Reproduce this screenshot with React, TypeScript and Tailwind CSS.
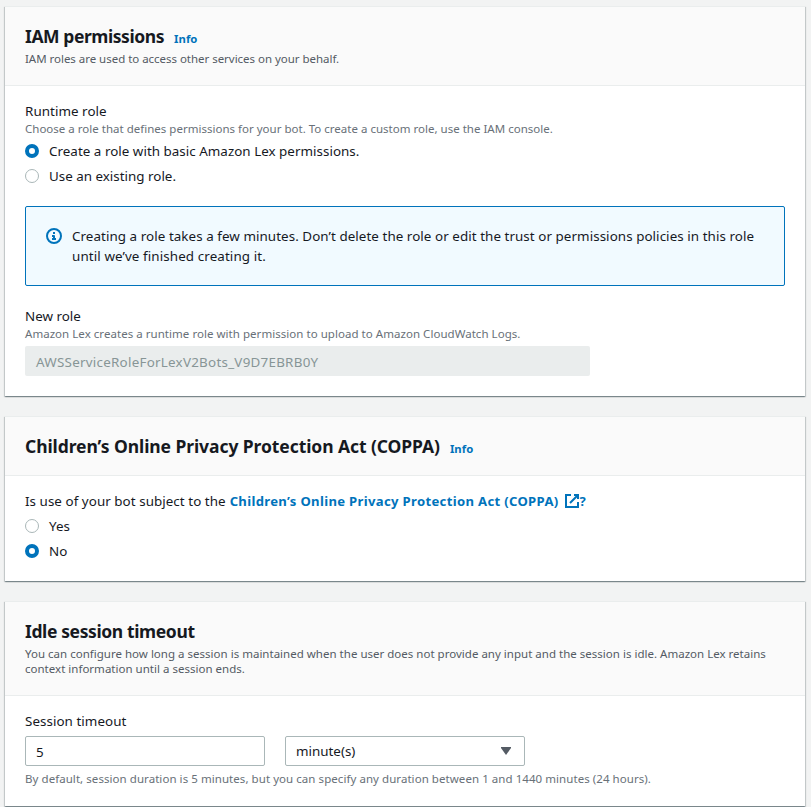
import type { ReactNode } from 'react';

function Card({ title, info, description, className, children }: { title: ReactNode; info?: boolean; description?: ReactNode; className: string; children: ReactNode }) {
  return (
    <section className={`flex flex-col border-t border-[#eaeded] bg-white shadow-[0_1px_1px_0_rgba(0,28,36,0.3),1px_1px_1px_0_rgba(0,28,36,0.15),-1px_1px_1px_0_rgba(0,28,36,0.15)] ${className}`}>
      <header className="border-b border-[#eaeded] bg-[#fafafa] px-5 pt-[18px] pb-[16px]">
        <div className="flex h-[22px] items-baseline gap-[10px] whitespace-nowrap">
          <h2 className="text-[17.5px] leading-[22px] font-bold text-[#16191f]">{title}</h2>
          {info && <a className="text-[11.3px] leading-[16px] font-bold tracking-[0.05px] text-[#0073bb]">Info</a>}
        </div>
        {description ? (
          <p className="mt-[4px] mb-[3px] text-[11.5px] leading-[15px] whitespace-nowrap text-[#545b64]">{description}</p>
        ) : (
          <div className="h-[2px]" />
        )}
      </header>
      <div className="flex flex-col px-5 pt-[15px]">{children}</div>
    </section>
  );
}

function Radio({ checked, children }: { checked?: boolean; children: ReactNode }) {
  return (
    <label className="flex h-5 items-center gap-[10px] whitespace-nowrap">
      <span className={`size-[14px] shrink-0 rounded-full ${checked ? 'border-[4px] border-[#0073bb] bg-white' : 'border border-[#aab7b8] bg-white'}`} />
      {children}
    </label>
  );
}

export default function App() {
  return (
    <main className="flex h-[807px] w-[811px] flex-col gap-5 overflow-hidden bg-[#f2f3f3] pt-[6px] pr-[6px] pl-[5px] font-['Noto_Sans',sans-serif] text-[13.4px] leading-5 text-[#16191f]">
      <Card
        className="h-[390px] shrink-0"
        title={<span className="tracking-[-0.43px]">IAM permissions</span>}
        info
        description={<span className="tracking-[-0.03px]">IAM roles are used to access other services on your behalf.</span>}
      >
        <div className="tracking-[0.05px]">Runtime role</div>
        <p className="text-[11.5px] leading-[15px] tracking-[0.01px] whitespace-nowrap text-[#687078]">
          Choose a role that defines permissions for your bot. To create a custom role, use the IAM console.
        </p>
        <div className="mt-[5px] flex flex-col gap-[5px]">
          <Radio checked><span className="tracking-[0.025px]">Create a role with basic Amazon Lex permissions.</span></Radio>
          <Radio><span>Use an existing role.</span></Radio>
        </div>
        <div className="mt-5 flex h-20 gap-[10px] rounded-[2px] border border-[#0073bb] bg-[#f1faff] pt-[19px] pl-5">
          <svg className="mt-[2px] size-4 shrink-0" viewBox="0 0 16 16" fill="none" stroke="#0073bb" strokeWidth="2">
            <circle cx="8" cy="8" r="7" />
            <path d="M8 11V8H6M10 11H6M8 6V4" strokeLinejoin="round" />
          </svg>
          <p className="whitespace-nowrap">
            <span className="block tracking-[0.06px]">Creating a role takes a few minutes. Don’t delete the role or edit the trust or permissions policies in this role</span>
            <span className="block tracking-[0.1px]">until we’ve finished creating it.</span>
          </p>
        </div>
        <div className="mt-5">New role</div>
        <p className="text-[11.5px] leading-[15px] tracking-[0.04px] whitespace-nowrap text-[#687078]">
          Amazon Lex creates a runtime role with permission to upload to Amazon CloudWatch Logs.
        </p>
        <div className="mt-[5px] flex h-[30px] w-[565px] items-center rounded-[2px] bg-[#eaeded] pt-[2px] pl-[11px] tracking-[0.25px] text-[#879596]">
          AWSServiceRoleForLexV2Bots_V9D7EBRB0Y
        </div>
      </Card>

      <Card
        className="h-[165px] shrink-0"
        title={<span className="tracking-[-0.08px]">Children’s Online Privacy Protection Act (COPPA)</span>}
        info
      >
        <div className="flex whitespace-nowrap">
          <span className="tracking-[0.05px]">Is use of your bot subject to the</span>
          <a className="ml-[4px] flex text-[13.1px] font-bold text-[#0073bb]">
            <span className="tracking-[0.325px]">Children’s Online Privacy Protection Act (COPPA)</span>
            <svg className="mt-[2px] ml-[5px] size-4" viewBox="0 0 16 16" fill="none" stroke="#0073bb" strokeWidth="2">
              <path d="M10 2h4v4M6 10l8-8" />
              <path d="M14 9.05V14H2V2h5" />
            </svg>
            <span>?</span>
          </a>
        </div>
        <div className="mt-[5px] flex flex-col gap-[5px]">
          <Radio>Yes</Radio>
          <Radio checked>No</Radio>
        </div>
      </Card>

      <Card
        className="h-[205px] shrink-0"
        title={<span className="tracking-[-0.38px]">Idle session timeout</span>}
        description={
          <>
            <span className="block tracking-[0.013px]">You can configure how long a session is maintained when the user does not provide any input and the session is idle. Amazon Lex retains</span>
            <span className="block tracking-[0.013px]">context information until a session ends.</span>
          </>
        }
      >
        <div className="tracking-[0.05px]">Session timeout</div>
        <div className="mt-[5px] flex gap-5">
          <div className="flex h-[30px] w-60 items-center rounded-[2px] border border-[#aab7b8] pt-[2px] pl-[10px]">5</div>
          <div className="flex h-[30px] w-60 items-center justify-between rounded-[2px] border border-[#aab7b8] pr-[13px] pl-[10px]">
            <span>minute(s)</span>
            <svg className="h-2 w-[10px]" viewBox="0 0 10 8" fill="#545b64"><path d="M0 0h10v1L5 8 0 1z" /></svg>
          </div>
        </div>
        <p className="mt-[5px] text-[11.5px] leading-[15px] tracking-[0.057px] whitespace-nowrap text-[#687078]">
          By default, session duration is 5 minutes, but you can specify any duration between 1 and 1440 minutes (24 hours).
        </p>
      </Card>
    </main>
  );
}
